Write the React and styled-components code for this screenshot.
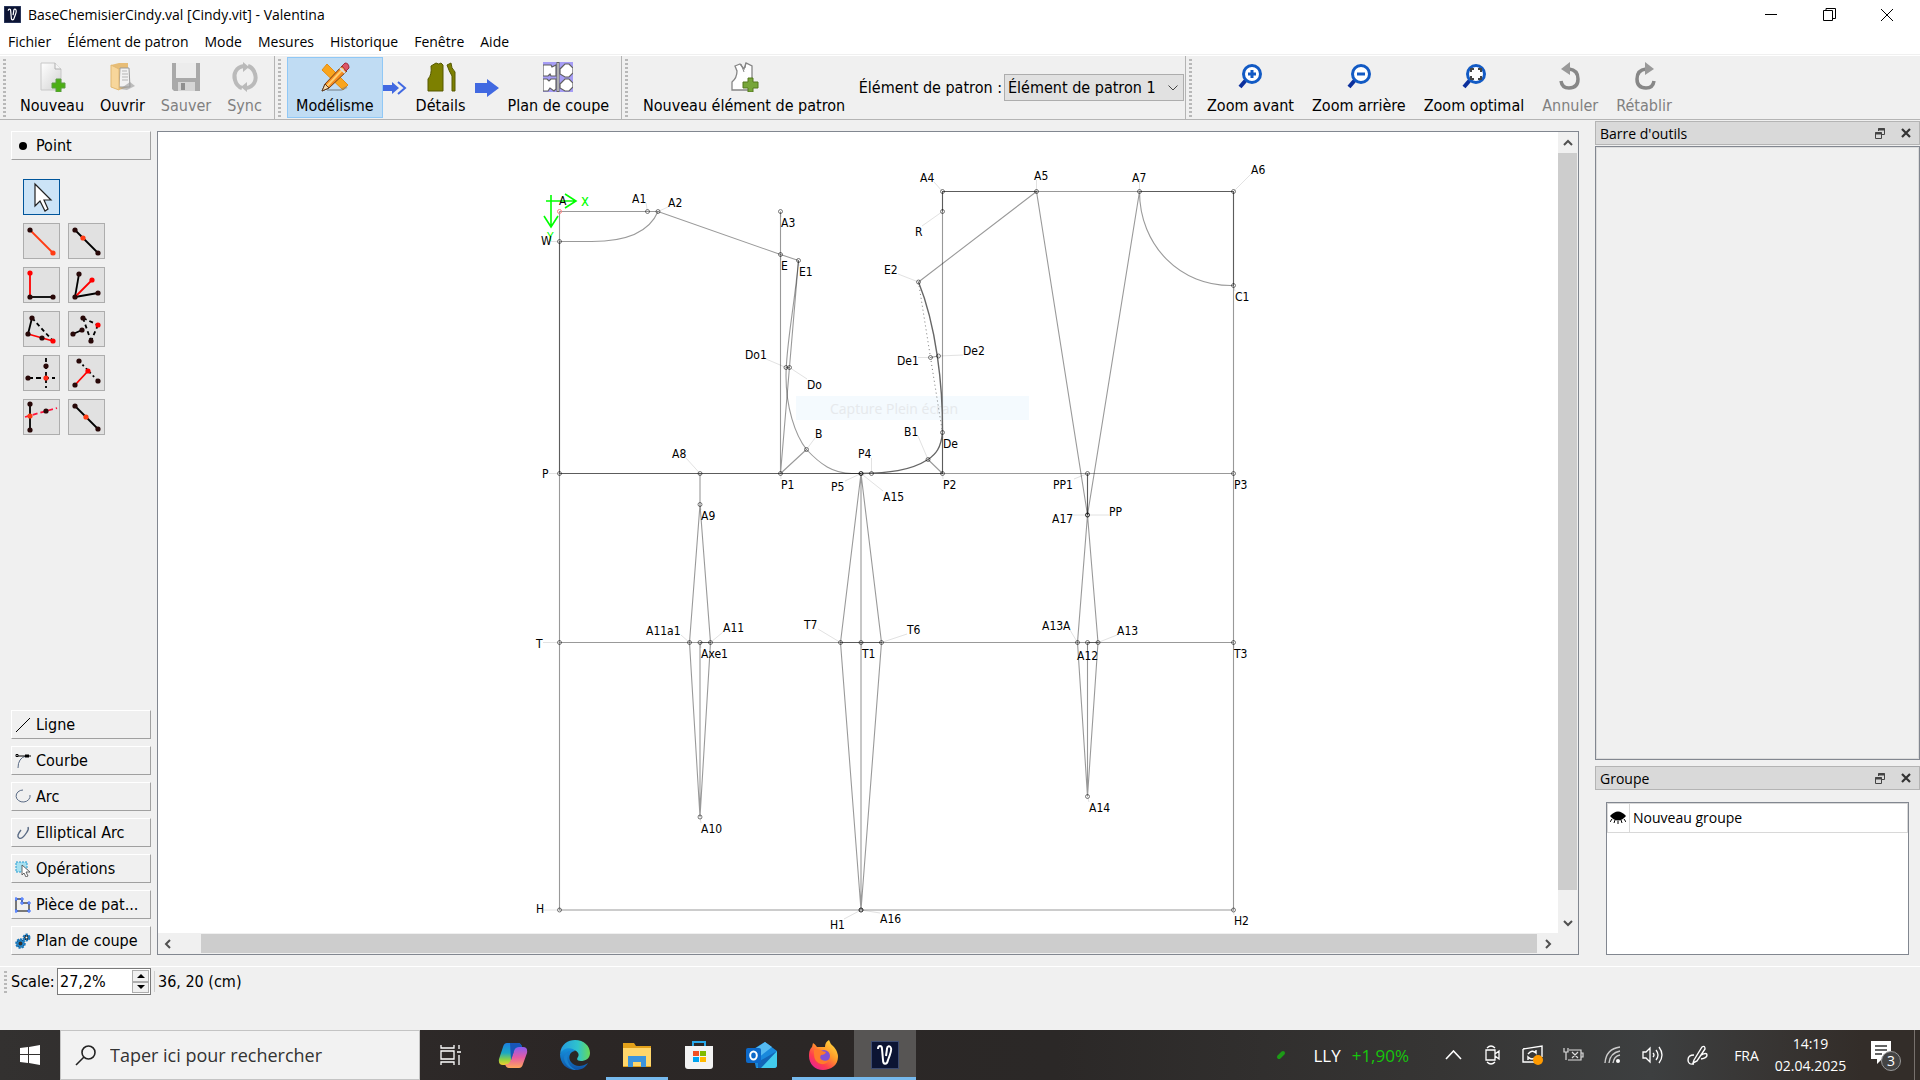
import React, { useState } from 'react';
import styled, { createGlobalStyle } from 'styled-components';

const uiFont = "'DejaVu Sans Condensed', 'DejaVu Sans', sans-serif";
const systemFont = "'Open Sans', 'Noto Sans', sans-serif";

const GlobalStyle = createGlobalStyle`
  * {
    box-sizing: border-box;
  }

  body {
    margin: 0;
    color: #000;
    background: #f0f0f0;
    font-family: ${uiFont};
    font-size: 16px;
  }

  button, input, select {
    margin: 0;
    color: inherit;
    font: inherit;
  }

  svg {
    display: block;
    flex: none;
  }
`;

const Screen = styled.div`
  display: flex;
  flex-direction: column;
  min-height: 100vh;
`;

/* window title and menu */

const TitleBar = styled.header`
  display: flex;
  align-items: center;
  height: 29px;
  padding: 0 4px;
  background: #fff;
  font-family: ${systemFont};
  font-size: 14px;
`;

const Title = styled.h1`
  flex: 1;
  margin: 0 0 0 7px;
  font-size: 14px;
  font-weight: 400;
`;

const WindowButton = styled.button`
  display: flex;
  align-items: center;
  justify-content: center;
  width: 58px;
  height: 28px;
  padding: 0;
  border: none;
  background: none;
`;

const MenuBar = styled.nav`
  display: flex;
  height: 26px;
  border-bottom: 1px solid #f0f0f0;
  background: #fff;
  font-family: ${systemFont};
  font-size: 14px;
`;

const MenuItem = styled.button`
  padding: 0 8px;
  border: none;
  background: none;
  line-height: 26px;
`;

/* toolbar */

const ToolBar = styled.div`
  display: flex;
  height: 65px;
  border-top: 1px solid #fff;
  border-bottom: 1px solid #b4b4b4;
`;

const ToolGroup = styled.div`
  display: flex;
  align-items: center;
  width: ${(props) => props.$width}px;
  padding-left: 3px;
  border-right: ${(props) => (props.$last ? 'none' : '1px solid #b4b4b4')};
`;

const Handle = styled.div`
  flex: none;
  width: 3px;
  height: ${(props) => props.$height}px;
  margin-right: ${(props) => props.$gap}px;
  background: repeating-linear-gradient(#b8b8b8 0 2px, transparent 2px 4px);
`;

const ToolButton = styled.button`
  display: flex;
  flex-direction: column;
  align-items: center;
  gap: 4px;
  flex: none;
  height: 61px;
  padding: 4px ${(props) => (props.$tight ? '7px' : '8px')} 0;
  border: 1px solid ${(props) => (props.$active ? '#90c8f6' : 'transparent')};
  background: ${(props) => (props.$active ? '#c0dcf3' : 'none')};
  color: ${(props) => (props.disabled ? '#808080' : '#000')};
  line-height: 20px;
  white-space: nowrap;
`;

const PieceLabel = styled.label`
  margin-left: auto;
  padding-right: 2px;
  white-space: nowrap;
`;

const SelectBox = styled.div`
  position: relative;
  width: 181px;
  padding-right: 1px;

  svg {
    position: absolute;
    top: 11px;
    right: 7px;
    pointer-events: none;
  }
`;

const PieceSelect = styled.select`
  display: block;
  appearance: none;
  width: 100%;
  height: 27px;
  padding: 0 3px;
  border: 1px solid #adadad;
  border-radius: 0;
  background: #e1e1e1;
`;

/* body */

const Workspace = styled.main`
  display: flex;
  flex: 1;
  padding: 11px 0;
`;

const SidePanel = styled.aside`
  display: flex;
  flex-direction: column;
  gap: 7px;
  width: 157px;
  padding: 0 6px 0 11px;
`;

const SectionButton = styled.button`
  display: flex;
  align-items: center;
  gap: 5px;
  height: 29px;
  padding: 0 0 0 3px;
  border: 1px solid;
  border-color: #fff #a0a0a0 #a0a0a0 #fff;
  background: #f0f0f0;
  white-space: nowrap;
`;

const PointTools = styled.div`
  display: grid;
  grid-template-columns: 37px 37px;
  grid-auto-rows: 36px;
  gap: 8px;
  flex: 1;
  align-content: start;
  padding: 12px;
`;

const PointTool = styled.button`
  padding: 0;
  border: 1px solid ${(props) => (props.$active ? '#00559b' : '#adadad')};
  background: ${(props) => (props.$active ? '#cce4f7' : '#e1e1e1')};
`;

const ToolGap = styled.span``;

const SceneFrame = styled.section`
  display: grid;
  grid-template-columns: 1fr 20px;
  grid-template-rows: 1fr 21px;
  flex: 1;
  min-width: 0;
  border: 1px solid #828790;
  background: #f0f0f0;
`;

const Scene = styled.svg`
  width: 100%;
  height: 100%;
  background: #fff;
  font-family: ${uiFont};
  font-size: 12px;
`;

const ScrollBar = styled.div`
  display: flex;
  flex-direction: ${(props) => (props.$vertical ? 'column' : 'row')};
  padding: ${(props) => (props.$vertical ? '0 1px 0 0' : '1px 0')};
`;

const ScrollButton = styled.button`
  display: flex;
  align-items: center;
  justify-content: center;
  flex: none;
  width: ${(props) => (props.$vertical ? 'auto' : '21px')};
  height: ${(props) => (props.$vertical ? '21px' : 'auto')};
  padding: 0;
  border: none;
  background: #f0f0f0;
`;

const ScrollThumb = styled.div`
  flex: ${(props) => props.$size};
  background: #cdcdcd;
`;

const ScrollRest = styled.div`
  flex: ${(props) => props.$size};
`;

const Docks = styled.aside`
  display: flex;
  flex-direction: column;
  width: 325px;
  margin: -10px 0 0 16px;
`;

const DockTitle = styled.div`
  display: flex;
  align-items: center;
  gap: 16px;
  height: 24px;
  padding: 0 8px 0 4px;
  border: 1px solid #b4b4b4;
  background: #d9d9d9;
  font-family: ${systemFont};
  font-size: 14px;
`;

const DockName = styled.h2`
  flex: 1;
  margin: 0;
  font-size: 14px;
  font-weight: 400;
`;

const DockButton = styled.button`
  padding: 0;
  border: none;
  background: none;
`;

const DockBody = styled.div`
  flex: 1;
  margin: 1px 0 6px;
  border: 1px solid #828790;
  box-shadow: inset 0 0 0 1px #dcdcdc;
`;

const GroupFrame = styled.div`
  height: 153px;
  margin: 12px 11px 0;
  border: 1px solid #828790;
  background: #fff;
`;

const GroupTable = styled.table`
  width: 100%;
  border-collapse: collapse;
  font-family: ${systemFont};
  font-size: 14px;
  line-height: 20px;

  td {
    height: 29px;
    padding: 0 3px;
    border: 1px solid #d8d8d8;
  }

  td:first-child {
    width: 22px;
    padding: 0 2px;
  }
`;

/* status bar */

const StatusBar = styled.footer`
  display: flex;
  align-items: center;
  height: 64px;
  padding: 0 0 34px 4px;
  border-top: 1px solid #fff;
`;

const ScaleLabel = styled.label`
  width: 46px;
`;

const SpinBox = styled.div`
  display: flex;
  width: 94px;
  height: 27px;
  padding: 1px;
  border: 1px solid #7a7a7a;
  background: #fff;
`;

const SpinInput = styled.input`
  flex: 1;
  min-width: 0;
  padding: 0 1px;
  border: none;
  outline: none;
`;

const SpinButtons = styled.div`
  display: grid;
  width: 17px;
`;

const SpinButton = styled.button`
  display: flex;
  align-items: center;
  justify-content: center;
  padding: 0;
  border: 1px solid #adadad;
  background: #f0f0f0;
`;

const Coordinates = styled.output`
  margin-left: 3px;
  padding-left: 3px;
  border-left: 1px solid #d0d0d0;
  line-height: 21px;
`;

/* windows taskbar */

const TaskBar = styled.footer`
  display: flex;
  height: 50px;
  background: linear-gradient(90deg, #333130, #2b2625 30%, #2b2827 55%, #363534 75%, #3d3f40 86%, #332d29 97%);
  color: #fff;
  font-family: ${systemFont};
`;

const TaskButton = styled.button`
  display: flex;
  align-items: center;
  justify-content: center;
  width: 62px;
  padding: 0;
  border: none;
  background: ${(props) => (props.$active ? '#575554' : 'none')};
  box-shadow: ${(props) => (props.$open ? 'inset 0 -3px #76b9ed' : 'none')};
`;

const StartButton = styled(TaskButton)`
  width: 60px;
`;

const SearchBox = styled.label`
  display: flex;
  align-items: center;
  gap: 14px;
  width: 360px;
  padding-left: 14px;
  border: 1px solid #c4c4c4;
  background: #f2f2f2;
  color: #333;
`;

const SearchInput = styled.input`
  flex: 1;
  min-width: 0;
  padding: 0;
  border: none;
  outline: none;
  background: none;
  font-size: 18px;

  &::placeholder {
    color: #333;
    opacity: 1;
  }
`;

const Tray = styled.div`
  display: flex;
  align-items: center;
  margin-left: auto;
  font-size: 14px;
`;

const Stock = styled.button`
  display: flex;
  align-items: center;
  gap: 11px;
  padding: 0;
  margin-right: 24px;
  border: none;
  background: none;
  font-size: 17px;

  svg {
    margin-right: 16px;
  }
`;

const Change = styled.span`
  color: #16c60c;
`;

const TrayButton = styled.button`
  display: flex;
  align-items: center;
  justify-content: center;
  width: ${(props) => (props.$wide ? '48px' : '40px')};
  height: 50px;
  padding: 0;
  border: none;
  background: none;
`;

const Language = styled.button`
  width: 51px;
  padding: 0;
  border: none;
  background: none;
`;

const Clock = styled.time`
  width: 77px;
  margin-right: 16px;
  line-height: 22px;
  text-align: center;
`;

const ShowDesktop = styled.button`
  width: 6px;
  height: 50px;
  padding: 0;
  margin-left: 9px;
  border: none;
  border-left: 1px solid #77716d;
  background: none;
`;

const menus = ['Fichier', 'Élément de patron', 'Mode', 'Mesures', 'Historique', 'Fenêtre', 'Aide'];

const LogoIcon = ({ width, height }) => (
  <svg width={width} height={height} viewBox="0 0 28 28">
    <rect width="28" height="28" fill="#0c1433" />
    <rect x="0.5" y="0.5" width="27" height="27" fill="none" stroke="#3c4a70" />
    <path d="M7 8C7 4 11 4 11 8L12 19C12 24 16 24 17 19C19 14 21 9 20 7C19 4 16 5 16 8L15 15" fill="none" stroke="#fff" strokeWidth="2" />
  </svg>
);

const NewIcon = () => (
  <svg width="30" height="30" viewBox="0 0 30 30">
    <defs>
      <linearGradient id="paper" x2="1" y2="1"><stop stopColor="#fff" /><stop offset="1" stopColor="#d2d2d2" /></linearGradient>
    </defs>
    <path d="M4 1h14l6 6v21H4z" fill="url(#paper)" stroke="#c8c8c8" />
    <path d="M18 1v6h6" fill="#f4f4f4" stroke="#b0b0b0" />
    <path d="M19 17h5v4h4v5h-4v4h-5v-4h-4v-5h4z" fill="#4caf14" stroke="#5b9c42" />
  </svg>
);

const OpenIcon = () => (
  <svg width="30" height="30" viewBox="0 0 30 30">
    <path d="M4 3l8-2h9v24l-9 3z" fill="#e7bd77" />
    <path d="M13 6h9l1 19H12z" fill="#f2f2f2" stroke="#9b9b9b" />
    <path d="M15 9h5M15 12h6M15 15h6M15 18h6" stroke="#b5b5b5" />
    <path d="M4 3l8 4v21l-8-3z" fill="#f7d69b" stroke="#e2b872" />
    <path d="M13 27l10-7 5 4-8 4z" fill="#999" opacity="0.6" />
  </svg>
);

const SaveIcon = () => (
  <svg width="30" height="30" viewBox="0 0 30 30">
    <path d="M1 1h28v28H3l-2-2z" fill="#a9a9a9" />
    <path d="M5 1h20v15H5z" fill="#ececec" />
    <path d="M7 20h17v9H7z" fill="#d6d6d6" />
    <path d="M10 21h4v7h-4z" fill="#909090" />
  </svg>
);

const SyncIcon = () => (
  <svg width="30" height="30" viewBox="0 0 30 30" fill="none" stroke="#bababa" strokeWidth="4">
    <path d="M14 4C6 5 3 12 5 18c1 4 4 7 7 8" />
    <path d="M16 26c8-1 11-8 9-14-1-4-4-7-7-8" />
    <path d="M13 0l6 5-6 5zM17 30l-6-5 6-5z" fill="#bababa" stroke="none" />
  </svg>
);

const DraftIcon = () => (
  <svg width="30" height="30" viewBox="0 0 30 30">
    <path d="M7 2L28 23l-5 5L2 8z" fill="#f9a51d" stroke="#e58d12" />
    <path d="M7 28h14l6-3" fill="none" stroke="#6e7984" strokeWidth="2" opacity="0.5" />
    <path d="M5 22L22 4l5 5L9 26l-7 3z" fill="#f58a1f" stroke="#734217" />
    <path d="M7 24L24 6" stroke="#ffd071" strokeWidth="2" />
    <path d="M22 4l3-3q4 0 4 5l-3 3z" fill="#db5566" stroke="#a32a3b" />
    <path d="M20 6l5 5" stroke="#ddd" strokeWidth="2" />
    <path d="M5 22l4 4-7 3z" fill="#f3d8ac" stroke="#5c3920" />
  </svg>
);

const DetailsIcon = () => (
  <svg width="30" height="30" viewBox="0 0 30 30" fill="#7d8000" stroke="#565900">
    <path d="M2 29V17q4-4 3-13l5-3q3 2 5 0l2 2v26z" />
    <path d="M21 3l4-2q0 5 4 9v19h-3V14q-3-5-5-11z" />
  </svg>
);

const LayoutIcon = () => (
  <svg width="30" height="30" viewBox="0 0 30 30">
    <path d="M0 0h30v30H0z" fill="#a69df5" />
    <g fill="#fff" stroke="#606060" strokeWidth="1.2">
      <path d="M0 3h8l1 2 4-2v11H8l-1-2-2 2H0zM13 17v10l-2 2-4-3-2 3H0V17h4l2 2 2-2z" />
      <path d="M17 7l5-5h4l4 4v5l-4 4h-4l-5-3zM17 22l5-5h4l4 4v4l-4 4h-4l-5-3z" />
    </g>
    <path d="M15 0v30" stroke="#606060" strokeWidth="3" />
    <path d="M15 1v28" stroke="#fff" />
  </svg>
);

const DoubleArrow = () => (
  <svg width="24" height="14" viewBox="0 0 24 14">
    <path d="M0 4h9V1l7 6-7 6v-3H0z" fill="#4169e1" />
    <path d="M15 1l7 6-7 6" fill="none" stroke="#4169e1" strokeWidth="2" />
  </svg>
);

const SingleArrow = () => (
  <svg width="24" height="18" viewBox="0 0 24 18">
    <path d="M0 4h12V0l12 9-12 9v-4H0z" fill="#4169e1" />
  </svg>
);

const NewPieceIcon = () => (
  <svg width="30" height="30" viewBox="0 0 30 30">
    <path d="M3 28V20q5-4 5-11L6 4l5-2 4 5 2-6 6 3v24z" fill="#fff" stroke="#858585" strokeWidth="1.3" />
    <path d="M12 2l3 8M17 1l-1 5" stroke="#858585" />
    <path d="M19 16h5v4h5v6h-5v4h-5v-4h-5v-6h5z" fill="#77a639" stroke="#54781f" />
  </svg>
);

const ZoomIcon = ({ children }) => (
  <svg width="30" height="30" viewBox="0 0 30 30">
    <path d="M11 18l-6 7" stroke="#0b2f9c" strokeWidth="4" />
    <circle cx="17" cy="12" r="8.5" fill="#fff" stroke="#125ac4" strokeWidth="3" />
    {children}
  </svg>
);

const UndoIcon = () => (
  <svg width="30" height="30" viewBox="0 0 30 30">
    <path d="M14 7q9 1 9 10 0 9-9 9-7 0-8-7" fill="none" stroke="#878787" strokeWidth="3.5" />
    <path d="M15 0v13L6 7z" fill="#999" />
  </svg>
);

const RedoIcon = () => (
  <svg width="30" height="30" viewBox="0 0 30 30">
    <path d="M17 7q-9 1-9 10 0 9 9 9 7 0 8-7" fill="none" stroke="#878787" strokeWidth="3.5" />
    <path d="M16 0v13l9-6z" fill="#999" />
  </svg>
);

const Chevron = ({ d }) => (
  <svg width="12" height="12" viewBox="0 0 12 12">
    <path d={d} fill="none" stroke="#505050" strokeWidth="2" />
  </svg>
);

// each tool icon is a list of segments [x1, y1, x2, y2, colour, dash] and dots [x, y, colour]
const pointTools = [
  { name: 'Point à distance et angle', lines: [[7, 7, 30, 30, '#ff3c14']], dots: [[7, 7], [30, 30, '#ff3c14']] },
  { name: 'Point sur une ligne', lines: [[7, 7, 30, 30]], dots: [[7, 7], [30, 30], [15, 15, '#ff3c14']] },
  { name: 'Perpendiculaire', lines: [[7, 30, 30, 30], [7, 6, 7, 30, '#f00']], dots: [[7, 6, '#f00'], [7, 30], [30, 30]] },
  { name: 'Bissectrice', lines: [[7, 30, 11, 7], [7, 30, 30, 26], [7, 30, 24, 13, '#f00']], dots: [[11, 7], [30, 26], [24, 13, '#f00'], [7, 30]] },
  { name: 'Épaule', lines: [[9, 7, 5, 23], [9, 7, 30, 30, '#000', '4 3'], [5, 23, 30, 30, '#f00']], dots: [[9, 7], [5, 23], [19, 27], [30, 30, '#f00']] },
  { name: 'Point de contact', lines: [[5, 23, 14, 19], [15, 7, 30, 14, '#000', '4 3'], [30, 14, 23, 30, '#000', '4 3'], [15, 7, 23, 30, '#000', '4 3']], dots: [[5, 23], [14, 19], [15, 7], [23, 30], [30, 14, '#f00']] },
  { name: 'Point XY', lines: [[5, 23, 32, 23, '#000', '5 3'], [23, 3, 23, 33, '#000', '4 3']], dots: [[5, 23], [23, 11], [23, 23, '#ff2814']] },
  { name: 'Hauteur', lines: [[11, 6, 30, 26, '#000', '2 3'], [7, 30, 20, 16, '#f00']], dots: [[11, 6], [30, 26], [7, 30], [20, 16, '#f00']] },
  { name: 'Intersection ligne et axe', lines: [[7, 5, 7, 31], [2, 18, 34, 9, '#ff143c', '5 3']], dots: [[7, 5], [7, 31], [23, 12], [7, 17, '#ff3c14']] },
  { name: 'Milieu', lines: [[7, 7, 30, 30]], dots: [[7, 7], [30, 30], [18, 18, '#ff3c14']] },
];

const PointToolIcon = ({ lines, dots }) => (
  <svg width="35" height="34" viewBox="1 1 35 34">
    {lines.map(([x1, y1, x2, y2, color = '#000', dash]) => (
      <line key={`${x1}-${y1}-${x2}`} x1={x1} y1={y1} x2={x2} y2={y2} stroke={color} strokeWidth="1.8" strokeDasharray={dash} />
    ))}
    {dots.map(([x, y, color = '#280808']) => (
      <circle key={`${x}-${y}`} cx={x} cy={y} r="2.6" fill={color} />
    ))}
  </svg>
);

const sections = [
  { name: 'Ligne', icon: <path d="M1 15L15 1" stroke="#000" /> },
  {
    name: 'Courbe',
    icon: (
      <>
        <path d="M3 15Q3 5 11 3" fill="none" stroke="#5a6b85" />
        <path d="M1 3h15" stroke="#000" />
        <path d="M1 1.5h2v2H1z" fill="#fff" stroke="#000" />
        <path d="M10 1.500h4v3h-4z" />
      </>
    ),
  },
  { name: 'Arc', icon: <path d="M8 1a7 6 0 1 0 7 5" fill="none" stroke="#5a6b85" /> },
  { name: 'Elliptical Arc', icon: <path d="M6 5Q1 11 4 13t8-6q2-3 1-5" fill="none" stroke="#5a6b85" strokeWidth="1.4" /> },
  {
    name: 'Opérations',
    icon: (
      <>
        <rect x="1" y="1" width="11" height="10" fill="#a6e0f0" stroke="#259bd1" strokeDasharray="2 1" />
        <path d="M7 4v10l2-2 2 4 2-1-2-4h4z" fill="#fff" stroke="#555" strokeWidth="0.9" />
      </>
    ),
  },
  {
    name: 'Pièce de pat...',
    icon: (
      <>
        <path d="M1 2h6v4h7v8H1z" fill="none" stroke="#000" />
        <path d="M0 1h2v2H0zM6 1h2v2H6zM6 5h2v2H6zM13 5h2v2h-2zM13 13h2v2h-2zM0 13h2v2H0z" fill="#fff" stroke="#2b62ff" />
      </>
    ),
  },
  {
    name: 'Plan de coupe',
    icon: (
      <>
        <circle cx="5.5" cy="10.5" r="4" fill="#222" stroke="#1576bd" strokeWidth="2.5" strokeDasharray="2 1" />
        <circle cx="5.5" cy="10.5" r="2.8" fill="#333" stroke="#2186cc" strokeWidth="1.6" />
        <circle cx="11.5" cy="4.5" r="2.8" fill="#222" stroke="#1576bd" strokeWidth="2.4" strokeDasharray="2 1" />
        <circle cx="11.5" cy="4.5" r="1" fill="#fff" />
      </>
    ),
  },
];

// name, point x/y, label x/y (left end of the baseline)
const points = [
  ['A1', 647.5, 211.5, 632, 203], ['A2', 658, 211.5, 668, 207], ['A3', 780.5, 211.5, 781, 227],
  ['W', 559.5, 241.5, 541, 245], ['E', 780.5, 254.5, 781, 270], ['E1', 798.5, 260.5, 799, 276],
  ['A4', 942.5, 191.5, 920, 182], ['R', 942.5, 211.5, 915, 236], ['A5', 1036.5, 191.5, 1034, 180],
  ['A7', 1139.5, 191.5, 1132, 182], ['A6', 1233.5, 191.5, 1251, 174], ['C1', 1233.5, 285.5, 1235, 301],
  ['E2', 918.5, 282, 884, 274], ['De1', 930.5, 357.5, 897, 365], ['De2', 938.5, 356, 963, 355],
  ['Do1', 786, 367.5, 745, 359], ['Do', 789.5, 367.5, 807, 389], ['B', 806.5, 449.5, 815, 438],
  ['B1', 928, 459.5, 904, 436], ['De', 942.5, 432.5, 943, 448], ['P', 559.5, 473.5, 542, 478],
  ['A8', 700, 473.5, 672, 458], ['P1', 780.5, 473.5, 781, 489], ['P5', 861, 473.5, 831, 491],
  ['P4', 871.5, 473.5, 858, 458], ['A15', 861, 473.5, 883, 501], ['P2', 942.5, 473.5, 943, 489],
  ['PP1', 1087.5, 473.5, 1053, 489], ['P3', 1233.5, 473.5, 1234, 489], ['A17', 1087.5, 515, 1052, 523],
  ['PP', 1087.5, 515, 1109, 516], ['A9', 700, 504.5, 701, 520], ['T', 559.5, 642.5, 536, 648],
  ['A11a1', 689.5, 642.5, 646, 635], ['Axe1', 700, 642.5, 701, 658], ['A11', 710.5, 642.5, 723, 632],
  ['T7', 840.5, 642.5, 804, 629], ['T1', 861, 642.5, 862, 658], ['T6', 881.5, 642.5, 907, 634],
  ['A13A', 1077.5, 642.5, 1042, 630], ['A12', 1087.5, 642.5, 1077, 660], ['A13', 1098, 642.5, 1117, 635],
  ['T3', 1233.5, 642.5, 1234, 658], ['A10', 700, 817, 701, 833], ['A14', 1087.5, 796.5, 1089, 812],
  ['H', 559.5, 910, 536, 913], ['H1', 861, 910, 830, 929], ['A16', 861, 910, 880, 923],
  ['H2', 1233.5, 910, 1234, 925],
];

// leader from the point to the nearest edge of its label
const Leader = ({ point }) => {
  const [name, x, y, labelX, labelY] = point;
  const right = labelX + name.length * 7;
  const endX = Math.max(labelX, Math.min(x, right));
  const endY = Math.max(labelY - 10, Math.min(y, labelY));
  return <line x1={x} y1={y} x2={endX} y2={endY} stroke="#e2e2e2" />;
};

const PatternScene = () => (
  <Scene viewBox="158 132 1400 801" aria-label="Base chemisier">
    <rect x="796" y="396" width="233" height="24" fill="#f4fafe" />
    <text x="830" y="414" fill="#e6e9ec" fontSize="14" fontFamily={systemFont}>Capture Plein écran</text>

    {points.map((point) => <Leader key={point[0]} point={point} />)}

    <g fill="none" stroke="#000" strokeOpacity="0.4" strokeWidth="1.1">
      <path d="M559.5 211.5V910H1233.5V191.5H942.5V473.5" />
      <path d="M559.5 211.5H658L780.5 254.5L798.5 260.5" />
      <path d="M559.5 241.5H590Q645 242 658 211.5" />
      <path d="M559.5 473.5H1233.5M559.5 642.5H1233.5" />
      <path d="M780.5 211.5V473.5L798.5 260.5M780.5 473.5L806.5 449.5M928 459.5L942.5 473.5" />
      <path d="M798.5 260.5C794 310 786 345 786 376S795 435 806.5 449.5C820 464 833 473.5 852 473.5" />
      <path d="M918.5 282L1036.5 191.5L1087.5 515L1139.5 191.5C1139.5 245 1180 287 1233.5 285.5" />
      <path d="M700 473.5V504.5L689.5 642.5L700 817L710.5 642.5L700 504.5M700 642.5V817" />
      <path d="M861 473.5L840.5 642.5L861 910L881.5 642.5L861 473.5V910" />
      <path d="M1087.5 473.5V515L1077.5 642.5L1087.5 796.5L1098 642.5L1087.5 515M1087.5 642.5V796.5" />
    </g>
    <g fill="none" stroke="#000" strokeOpacity="0.4" strokeWidth="1.1">
      <path d="M559.5 241.5V473.5H942.5V432.5M942.5 211.5V191.5H1036.5M1139.5 191.5H1233.5V285.5" />
      <path d="M852 473.5H871M840.5 642.5H881.5M700 642.5H710.5M1087.5 642.5H1098M1087.5 473.5V515" />
      <path d="M930.5 357.5L938.5 356M786 367.5H789.5" />
    </g>
    <path
      d="M918.5 282C936 325 943 385 942.5 432.5C941 448 936 454 928 459.5C910 471 888 473 861 473.5"
      fill="none"
      stroke="#666"
      strokeWidth="1.4"
    />
    <path d="M918.5 282L930.5 357.5L942.5 432.5" fill="none" stroke="#777" strokeDasharray="1 3" />

    <g fill="none" stroke="#000" strokeOpacity="0.5">
      {points.map(([name, x, y]) => <circle key={name} cx={x} cy={y} r="2" />)}
    </g>
    <circle cx="559.5" cy="211.5" r="2" fill="none" stroke="#ff8080" />

    <path d="M546 201h30M565 194l11 7-11 7M551 195v32M544 216l7 11 7-11" fill="none" stroke="#0f0" strokeWidth="1.6" />
    <text x="581" y="206" fill="#0f0" fontSize="15">x</text>
    <text x="547" y="241" fill="#0f0" fontSize="12">Y</text>

    <text x="559" y="205">A</text>
    {points.map(([name, , , x, y]) => <text key={name} x={x} y={y}>{name}</text>)}
  </Scene>
);

const Dock = ({ title }) => (
  <DockTitle>
    <DockName>{title}</DockName>
    <DockButton aria-label={`Détacher ${title}`}>
      <svg width="10" height="11" viewBox="0 0 10 11" fill="none" stroke="#444">
        <path d="M3.5 3V.5h6v6H7M.5 4.5h6v6h-6z" />
        <path d="M3 1.5h7M0 5.5h7" strokeWidth="2" />
      </svg>
    </DockButton>
    <DockButton aria-label={`Fermer ${title}`}>
      <svg width="10" height="10" viewBox="0 0 10 10">
        <path d="M1 1l8 8M9 1L1 9" stroke="#333" strokeWidth="2.2" />
      </svg>
    </DockButton>
  </DockTitle>
);

const TaskBarIcons = () => (
  <>
    <TaskButton aria-label="Affichage des tâches">
      <svg width="22" height="20" viewBox="0 0 22 20" fill="none" stroke="#fff" strokeWidth="1.3">
        <path d="M1 0v3h13V0M1 6h13v8H1zM1 20v-3h13v3M19 0v4M19 10v10M17 7h4" />
      </svg>
    </TaskButton>
    <TaskButton aria-label="Copilot">
      <svg width="30" height="28" viewBox="0 0 30 28">
        <defs>
          <linearGradient id="copilotA" x2="0" y2="1">
            <stop stopColor="#1b7fe0" /><stop offset="0.45" stopColor="#1ba7c4" /><stop offset="0.75" stopColor="#8ad146" /><stop offset="1" stopColor="#f4cf2c" />
          </linearGradient>
          <linearGradient id="copilotB" x2="0" y2="1">
            <stop stopColor="#8b5df0" /><stop offset="0.5" stopColor="#e45ba4" /><stop offset="1" stopColor="#ffa75b" />
          </linearGradient>
        </defs>
        <path d="M9 2h11q3 0 4 4l1 3h-6q-3 0-4 4l-2 7q-1 4-4 4H5q-5 0-4-6L5 6q1-4 4-4z" fill="url(#copilotA)" />
        <path d="M21 27H11q-3 0-4-4 4 1 6-4l3-9q1-4 5-4h4q5 0 4 6l-4 11q-1 4-4 4z" fill="url(#copilotB)" />
        <path d="M12 2h8q3 0 4 4h-3q-4 0-5 4l-3 9" fill="#1756b8" />
      </svg>
    </TaskButton>
    <TaskButton aria-label="Microsoft Edge">
      <svg width="32" height="32" viewBox="0 0 32 32">
        <defs>
          <linearGradient id="edgeA" x2="1"><stop stopColor="#249ae0" /><stop offset="0.6" stopColor="#2fc4cc" /><stop offset="1" stopColor="#68da57" /></linearGradient>
          <linearGradient id="edgeB" x2="0" y2="1"><stop stopColor="#1491dc" /><stop offset="1" stopColor="#1152a5" /></linearGradient>
        </defs>
        <path d="M1 15C2 5 9 1 16 1c9 0 15 6 15 13 0 6-5 8-9 8-5 0-4-3-3-4 2-3-1-7-5-7C8 10 2 12 1 15z" fill="url(#edgeA)" />
        <path d="M1 15c3-7 13-7 15-3-6 1-7 7-4 11 4 5 11 5 17 1-3 5-7 7-12 7C7 31 1 24 1 15z" fill="url(#edgeB)" />
        <path d="M12 12c-6 5-5 14 5 19-5 0-12-6-12-12 0-4 3-7 7-7z" fill="#177fce" />
      </svg>
    </TaskButton>
    <TaskButton $open aria-label="Explorateur de fichiers">
      <svg width="30" height="26" viewBox="0 0 30 26">
        <path d="M1 1h11l2 3h15v21H1z" fill="#e3a11a" />
        <path d="M1 6h28v18H1z" fill="#ffd66b" />
        <path d="M6 25V14h18v11h-5v-5h-8v5z" fill="#3c94dc" />
      </svg>
    </TaskButton>
    <TaskButton aria-label="Microsoft Store">
      <svg width="30" height="30" viewBox="0 0 30 30">
        <path d="M9 8V2h12v6" fill="none" stroke="#28a8ea" strokeWidth="2" />
        <path d="M1 6h28v20q0 3-3 3H4q-3 0-3-3z" fill="#f3f3f3" />
        <path d="M9 11h6v5H9z" fill="#f25022" />
        <path d="M16 11h6v5h-6z" fill="#7fba00" />
        <path d="M9 17h6v5H9z" fill="#00a4ef" />
        <path d="M16 17h6v5h-6z" fill="#ffb900" />
      </svg>
    </TaskButton>
    <TaskButton aria-label="Outlook">
      <svg width="31" height="28" viewBox="0 0 31 28">
        <path d="M6 9L19 1l12 9v14q0 3-3 3H10z" fill="#1989dc" />
        <path d="M19 1l7 5L12 17 7 9z" fill="#55baf1" />
        <path d="M31 10v14q0 3-3 3H11z" fill="#42cbed" />
        <path d="M31 10L12 21v6h3z" fill="#1265b7" />
        <rect y="7" width="15" height="15" rx="2" fill="#0d69c9" />
        <ellipse cx="7.5" cy="14.5" rx="3.3" ry="4" fill="none" stroke="#fff" strokeWidth="2" />
      </svg>
    </TaskButton>
    <TaskButton $open aria-label="Firefox">
      <svg width="30" height="30" viewBox="0 0 30 30">
        <defs>
          <linearGradient id="fox" x1="1" x2="0.2" y2="1"><stop stopColor="#ffec45" /><stop offset="0.45" stopColor="#ff9829" /><stop offset="0.75" stopColor="#ff3d4e" /><stop offset="1" stopColor="#e6209a" /></linearGradient>
        </defs>
        <path d="M17 7q0-5 4-7 1 4 5 7 4 5 4 10c0 8-7 13-15 13S1 24 1 16c0-5 1-7 3-9l1-4q2 1 4 4z" fill="url(#fox)" />
        <circle cx="16" cy="16" r="6" fill="#8051d6" />
        <path d="M6 10q5-2 8 1l4 1q-1 3-5 3-2 3 1 5 4 2 8-1-3 6-9 5-7-2-7-10z" fill="#ff7b2b" />
      </svg>
    </TaskButton>
    <TaskButton $open $active aria-label="Valentina">
      <LogoIcon width={28} height={28} />
    </TaskButton>
  </>
);

const App = () => {
  const [scale, setScale] = useState('27,2%');
  const [search, setSearch] = useState('');

  return (
    <>
      <GlobalStyle />
      <Screen>
        <TitleBar>
          <LogoIcon width={17} height={17} />
          <Title>BaseChemisierCindy.val [Cindy.vit] - Valentina</Title>
          <WindowButton aria-label="Réduire">
            <svg width="12" height="12"><path d="M0 5.5h12" stroke="#000" /></svg>
          </WindowButton>
          <WindowButton aria-label="Restaurer">
            <svg width="13" height="13" fill="none" stroke="#000"><path d="M.5 2.5h9v10h-9zM3 2V.5h9.500v10H10" /></svg>
          </WindowButton>
          <WindowButton aria-label="Fermer">
            <svg width="12" height="12"><path d="M0 0l12 12M12 0L0 12" stroke="#000" /></svg>
          </WindowButton>
        </TitleBar>
        <MenuBar>
          {menus.map((name) => <MenuItem key={name}>{name}</MenuItem>)}
        </MenuBar>

        <ToolBar>
          <ToolGroup $width={275}>
            <Handle $height={58} $gap={6} />
            <ToolButton $tight><NewIcon />Nouveau</ToolButton>
            <ToolButton $tight><OpenIcon />Ouvrir</ToolButton>
            <ToolButton $tight disabled><SaveIcon />Sauver</ToolButton>
            <ToolButton $tight disabled><SyncIcon />Sync</ToolButton>
          </ToolGroup>
          <ToolGroup $width={347}>
            <Handle $height={58} $gap={6} />
            <ToolButton $active><DraftIcon />Modélisme</ToolButton>
            <DoubleArrow />
            <ToolButton><DetailsIcon />Détails</ToolButton>
            <SingleArrow />
            <ToolButton><LayoutIcon />Plan de coupe</ToolButton>
          </ToolGroup>
          <ToolGroup $width={564}>
            <Handle $height={58} $gap={6} />
            <ToolButton><NewPieceIcon />Nouveau élément de patron</ToolButton>
            <PieceLabel htmlFor="piece">Élément de patron :</PieceLabel>
            <SelectBox>
              <PieceSelect id="piece">
                <option>Élément de patron 1</option>
              </PieceSelect>
              <svg width="10" height="6" fill="none" stroke="#444"><path d="M.5.5L5 5 9.500.5" /></svg>
            </SelectBox>
          </ToolGroup>
          <ToolGroup $last>
            <Handle $height={58} $gap={6} />
            <ToolButton><ZoomIcon><path d="M17 8v8M13 12h8" stroke="#125ac4" strokeWidth="3" /></ZoomIcon>Zoom avant</ToolButton>
            <ToolButton><ZoomIcon><path d="M13 12h8" stroke="#125ac4" strokeWidth="3" /></ZoomIcon>Zoom arrière</ToolButton>
            <ToolButton>
              <ZoomIcon><path d="M12 10V7h3M19 7h3v3M22 14v3h-3M15 17h-3v-3" fill="none" stroke="#444" strokeWidth="2" /></ZoomIcon>
              Zoom optimal
            </ToolButton>
            <ToolButton disabled><UndoIcon />Annuler</ToolButton>
            <ToolButton disabled><RedoIcon />Rétablir</ToolButton>
          </ToolGroup>
        </ToolBar>

        <Workspace>
          <SidePanel>
            <SectionButton>
              <svg width="16" height="16"><circle cx="8" cy="8" r="4" /></svg>
              Point
            </SectionButton>
            <PointTools>
              <PointTool $active aria-label="Sélection">
                <svg width="35" height="34" viewBox="0 0 35 34">
                  <path d="M11 4v22l5-5 5 10 3-2-4-9h7z" fill="#fff" stroke="#222" strokeWidth="1.2" />
                </svg>
              </PointTool>
              <ToolGap />
              {pointTools.map((tool) => (
                <PointTool key={tool.name} aria-label={tool.name}>
                  <PointToolIcon lines={tool.lines} dots={tool.dots} />
                </PointTool>
              ))}
            </PointTools>
            {sections.map((section) => (
              <SectionButton key={section.name}>
                <svg width="16" height="16" viewBox="0 0 16 16">{section.icon}</svg>
                {section.name}
              </SectionButton>
            ))}
          </SidePanel>

          <SceneFrame>
            <PatternScene />
            <ScrollBar $vertical>
              <ScrollButton $vertical aria-label="Haut"><Chevron d="M2 8l4-4 4 4" /></ScrollButton>
              <ScrollThumb $size={737} />
              <ScrollRest $size={22} />
              <ScrollButton $vertical aria-label="Bas"><Chevron d="M2 4l4 4 4-4" /></ScrollButton>
            </ScrollBar>
            <ScrollBar>
              <ScrollButton aria-label="Gauche"><Chevron d="M7 2L3 6l4 4" /></ScrollButton>
              <ScrollRest $size={22} />
              <ScrollThumb $size={1335} />
              <ScrollButton aria-label="Droite"><Chevron d="M4 2l4 4-4 4" /></ScrollButton>
            </ScrollBar>
          </SceneFrame>

          <Docks>
            <Dock title="Barre d'outils" />
            <DockBody />
            <Dock title="Groupe" />
            <GroupFrame>
              <GroupTable>
                <tbody>
                  <tr>
                    <td>
                      <svg width="16" height="14" viewBox="0 0 16 14">
                        <path d="M0 5q8-9 16 0-8 9-16 0z" />
                        <path d="M2 8l-2 3M5 9l-1 3M8 10v3M11 9l1 3M14 8l2 3" stroke="#000" />
                      </svg>
                    </td>
                    <td>Nouveau groupe</td>
                  </tr>
                </tbody>
              </GroupTable>
            </GroupFrame>
          </Docks>
        </Workspace>

        <StatusBar>
          <Handle $height={22} $gap={4} />
          <ScaleLabel htmlFor="scale">Scale:</ScaleLabel>
          <SpinBox>
            <SpinInput id="scale" value={scale} onChange={(e) => setScale(e.target.value)} />
            <SpinButtons>
              <SpinButton aria-label="Agrandir"><svg width="8" height="4"><path d="M0 4l4-4 4 4z" /></svg></SpinButton>
              <SpinButton aria-label="Diminuer"><svg width="8" height="4"><path d="M0 0l4 4 4-4z" /></svg></SpinButton>
            </SpinButtons>
          </SpinBox>
          <Coordinates>36, 20 (cm)</Coordinates>
        </StatusBar>

        <TaskBar>
          <StartButton aria-label="Démarrer">
            <svg width="20" height="20" fill="#fff"><path d="M0 3l8-1v7H0zM9 2l11-2v9H9zM0 10h8v8l-8-1zM9 10h11v10L9 18z" /></svg>
          </StartButton>
          <SearchBox>
            <svg width="21" height="21" fill="none" stroke="#222" strokeWidth="1.6"><circle cx="13.500" cy="7.500" r="6.500" /><path d="M9 12l-8 8" /></svg>
            <SearchInput
              type="text"
              aria-label="Rechercher"
              placeholder="Taper ici pour rechercher"
              value={search}
              onChange={(e) => setSearch(e.target.value)}
            />
          </SearchBox>
          <TaskBarIcons />
          <Tray>
            <Stock>
              <svg width="10" height="10"><path d="M3 7l4-4" stroke="#1c9a16" strokeWidth="4" strokeLinecap="round" /></svg>
              LLY
              <Change>+1,90%</Change>
            </Stock>
            <TrayButton aria-label="Icônes cachées">
              <svg width="17" height="10" fill="none" stroke="#fff" strokeWidth="1.6"><path d="M1 9l7.500-8L16 9" /></svg>
            </TrayButton>
            <TrayButton aria-label="Caméra">
              <svg width="16" height="20" fill="none" stroke="#fff" strokeWidth="1.3"><path d="M1 5h9v10H1zM10 9l4-3v8l-4-3M2 3q4-4 8 0M2 17q4 4 8 0" /></svg>
            </TrayButton>
            <TrayButton aria-label="Windows Update">
              <svg width="22" height="21" fill="none" stroke="#fff" strokeWidth="1.4">
                <path d="M1 4l19-3v11M1 4v13h11M6 9q4-5 8-1V5M14 12q-4 4-8 0v3" />
                <circle cx="16" cy="15" r="5" fill="#ff9a00" stroke="none" />
              </svg>
            </TrayButton>
            <TrayButton aria-label="Batterie">
              <svg width="21" height="14" fill="none" stroke="#ddd" strokeWidth="1.2"><path d="M6 2h12v10H5M18 5h2v4h-2M9 4l6 6M15 4l-6 6M1 0v4h4V0M3 4v8" /></svg>
            </TrayButton>
            <TrayButton aria-label="Wi-Fi">
              <svg width="18" height="18" fill="none" stroke="#ccc" strokeWidth="1.4">
                <path d="M1 17Q2 3 16 1M5 17Q6 7 16 5M9 17q1-7 7-8" />
                <circle cx="14" cy="15" r="2" fill="#fff" stroke="none" />
              </svg>
            </TrayButton>
            <TrayButton aria-label="Volume">
              <svg width="22" height="18" fill="none" stroke="#fff" strokeWidth="1.3"><path d="M1 6h3l4-4v14l-4-4H1zM11 7q2 2 0 4M14 4q4 5 0 10M17 1q6 8 0 16" /></svg>
            </TrayButton>
            <TrayButton $wide aria-label="Stylet">
              <svg width="21" height="20" fill="none" stroke="#fff" strokeWidth="1.4"><path d="M7 15L15 2q3-2 3 2l-8 12-4 2zM7 10q-6 0-6 5t6 4M14 10q6-3 6 0t-6 4" /></svg>
            </TrayButton>
            <Language>FRA</Language>
            <Clock>14:19<br />02.04.2025</Clock>
            <TrayButton aria-label="Notifications">
              <svg width="32" height="32">
                <path d="M2 2h20v18h-9l-5 5v-5H2z" fill="#fff" />
                <path d="M6 7h12M6 11h12M6 15h7" stroke="#333" strokeWidth="1.4" />
                <circle cx="22" cy="22" r="9.500" fill="#444" stroke="#999" />
                <text x="18" y="27" fill="#fff" fontSize="14">3</text>
              </svg>
            </TrayButton>
            <ShowDesktop aria-label="Afficher le bureau" />
          </Tray>
        </TaskBar>
      </Screen>
    </>
  );
};

export default App;
